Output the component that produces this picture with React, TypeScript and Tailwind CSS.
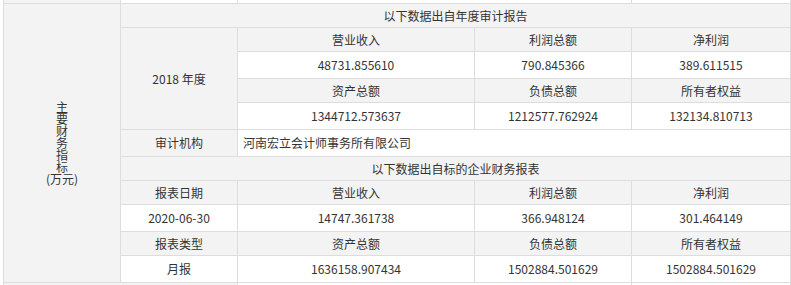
import React from 'react';

// 主要财务指标表（审计报告 + 标的企业财务报表）
const gray = 'bg-[#f3f3f3]';
const white = 'bg-white';

const Cell: React.FC<{ className?: string; children?: React.ReactNode }> = ({ className = '', children }) => (
  <div className={`flex items-center justify-center whitespace-nowrap ${className}`}>{children}</div>
);

const App: React.FC = () => {
  return (
    <div
      className="bg-white pl-[3px] text-[12px] leading-[12px] text-[#333333]"
      style={{ fontFamily: '"Noto Sans CJK SC", "Noto Sans", sans-serif' }}
    >
      <div
        className="grid w-[788px] gap-px bg-[#dddddd] px-px pb-px"
        style={{
          gridTemplateColumns: '116px 116px 236px 156px 158px',
          gridTemplateRows: '3px 23px 23px 26px 23px 26px 26px 23px 23px 26px 23px 26px 12px',
        }}
      >
        {/* 上一行（被截断） */}
        <Cell className={gray} />
        <Cell className={white} />
        <Cell className={`${white} col-span-2`} />
        <Cell className={white} />

        {/* 左侧标题 */}
        <Cell className={`${gray} row-span-11`}>
          <span className="whitespace-pre-line text-center leading-[12px]">{'主\n要\n财\n务\n指\n标\n(万元)'}</span>
        </Cell>

        {/* 年度审计报告 */}
        <Cell className={`${gray} col-span-4`}>以下数据出自年度审计报告</Cell>
        <Cell className={`${gray} row-span-4`}>2018 年度</Cell>
        <Cell className={gray}>营业收入</Cell>
        <Cell className={gray}>利润总额</Cell>
        <Cell className={gray}>净利润</Cell>
        <Cell className={white}>48731.855610</Cell>
        <Cell className={white}>790.845366</Cell>
        <Cell className={white}>389.611515</Cell>
        <Cell className={gray}>资产总额</Cell>
        <Cell className={gray}>负债总额</Cell>
        <Cell className={gray}>所有者权益</Cell>
        <Cell className={white}>1344712.573637</Cell>
        <Cell className={white}>1212577.762924</Cell>
        <Cell className={white}>132134.810713</Cell>

        <Cell className={gray}>审计机构</Cell>
        <Cell className={`${white} col-span-3 justify-start pl-[5px]`}>河南宏立会计师事务所有限公司</Cell>

        {/* 标的企业财务报表 */}
        <Cell className={`${gray} col-span-4`}>以下数据出自标的企业财务报表</Cell>
        <Cell className={gray}>报表日期</Cell>
        <Cell className={gray}>营业收入</Cell>
        <Cell className={gray}>利润总额</Cell>
        <Cell className={gray}>净利润</Cell>
        <Cell className={white}>2020-06-30</Cell>
        <Cell className={white}>14747.361738</Cell>
        <Cell className={white}>366.948124</Cell>
        <Cell className={white}>301.464149</Cell>
        <Cell className={gray}>报表类型</Cell>
        <Cell className={gray}>资产总额</Cell>
        <Cell className={gray}>负债总额</Cell>
        <Cell className={gray}>所有者权益</Cell>
        <Cell className={white}>月报</Cell>
        <Cell className={white}>1636158.907434</Cell>
        <Cell className={white}>1502884.501629</Cell>
        <Cell className={white}>1502884.501629</Cell>

        {/* 下一行（被截断） */}
        <Cell className={`${gray} col-span-2`} />
        <Cell className={`${white} col-span-2`} />
        <Cell className={white} />
      </div>
    </div>
  );
};

export default App;
